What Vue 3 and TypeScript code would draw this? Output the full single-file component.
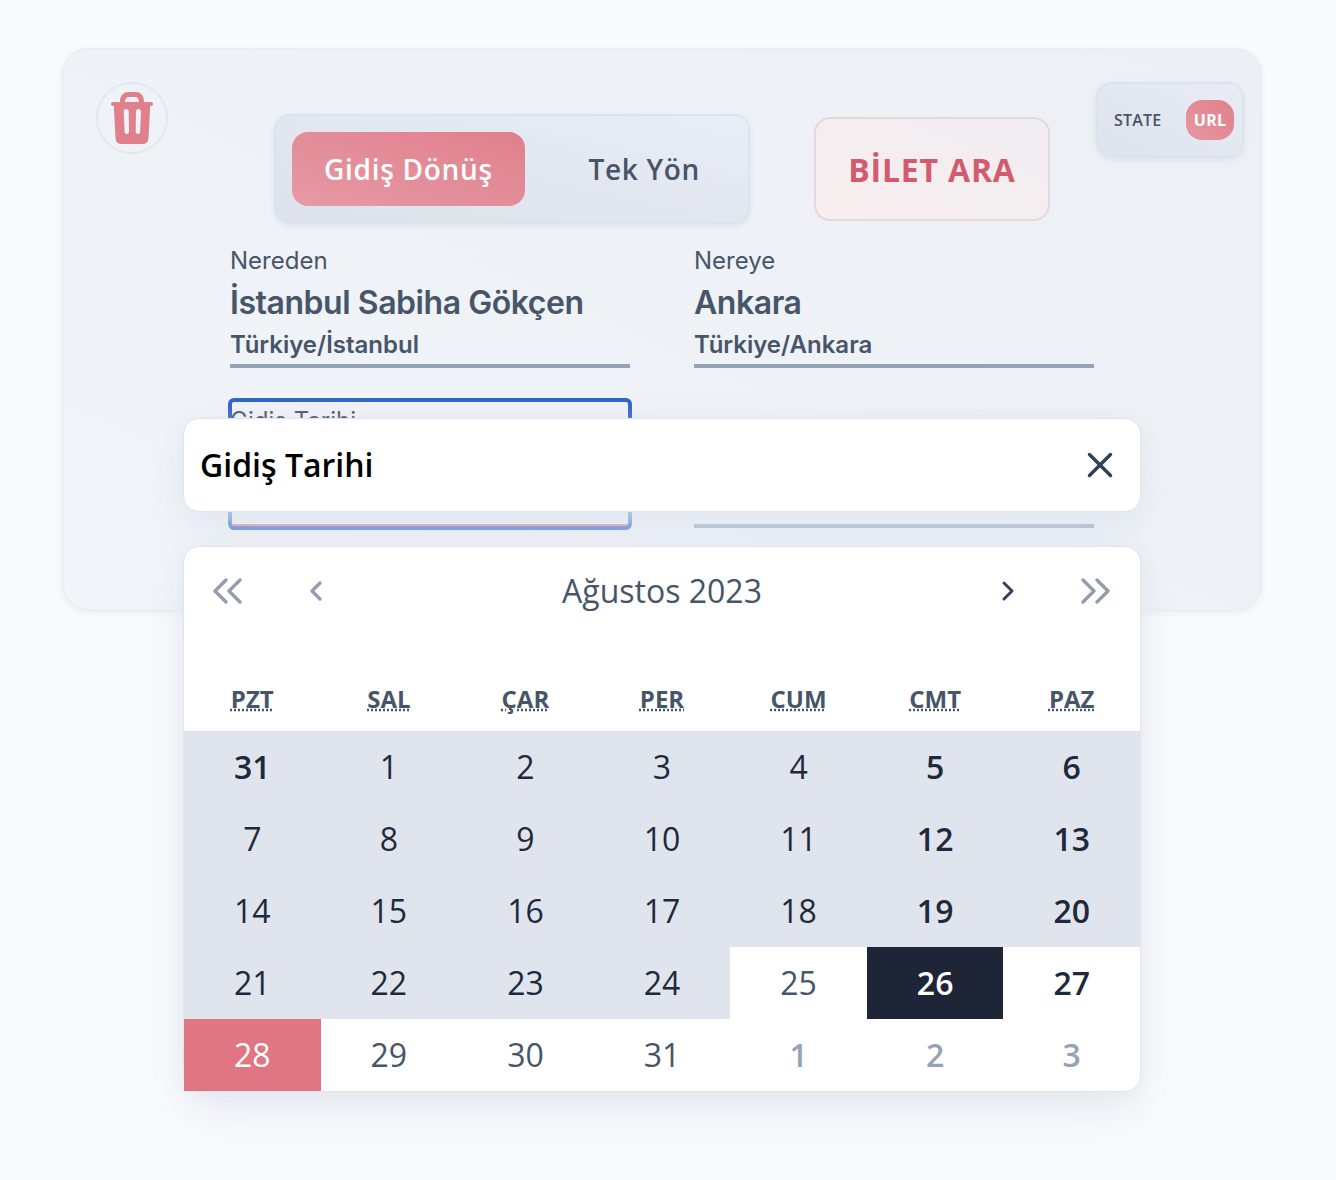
<template>
  <div class="page">
    <div class="card">
      <button class="trash" aria-label="Temizle">
        <svg width="42" height="52" viewBox="0 0 42 52">
          <path class="trash-fill" fill-rule="evenodd" d="M9 10C9 3 13 0 17 0h8c4 0 8 3 8 10h7c1.200 0 2 .8 2 2s-.8 2-2 2h-.8L37.500 46C37.200 50 35 52 31 52H11C7 52 4.800 50 4.500 46L2.800 14H2c-1.200 0-2-.8-2-2s.8-2 2-2zM14 10h14c0-3-1.500-5-4-5h-6c-2.500 0-4 2-4 5zM15.300 17c-1.500 0-2.700 1.200-2.600 2.700l.9 20c.1 1.400 1 2.300 2.200 2.300s2.200-1 2.200-2.400l-.3-20c0-1.500-1-2.600-2.400-2.600zM27.400 17c1.500 0 2.700 1.200 2.600 2.700l-.9 20c-.1 1.400-1 2.300-2.200 2.300s-2.200-1-2.200-2.400l.3-20c0-1.500 1-2.600 2.400-2.600z" />
        </svg>
      </button>

      <div class="mode-switch">
        <span class="mode-label">STATE</span>
        <span class="mode-pill">URL</span>
      </div>

      <div class="top-row">
        <div class="trip-tabs">
          <button class="trip-tab active">Gidiş Dönüş</button>
          <button class="trip-tab">Tek Yön</button>
        </div>
        <button class="search-btn">BİLET ARA</button>
      </div>

      <div class="fields">
        <div v-for="field in places" :key="field.label" class="field">
          <div class="field-label">{{ field.label }}</div>
          <div class="field-value">{{ field.value }}</div>
          <div class="field-sub">{{ field.sub }}</div>
        </div>
        <div class="field date-field focused">
          <div class="field-label">Gidiş Tarihi</div>
        </div>
        <div class="field date-field"></div>
      </div>
    </div>

    <div class="modal">
      <div class="modal-head">
        <span>Gidiş Tarihi</span>
        <svg class="close-icon" width="26" height="26" viewBox="0 0 26 26">
          <path class="icon-dark" d="M2.500 2.500l21 21M23.500 2.500l-21 21" />
        </svg>
      </div>

      <div class="calendar">
        <div class="nav">
          <svg class="nav-btn" width="34" height="26" viewBox="0 0 34 26">
            <path class="icon-muted" d="M15 2L4 13l11 11M29 2L18 13l11 11" />
          </svg>
          <svg class="nav-btn" width="34" height="26" viewBox="0 0 34 26">
            <path class="icon-muted" d="M21 5l-8 8 8 8" />
          </svg>
          <div class="month">Ağustos 2023</div>
          <svg class="nav-btn" width="34" height="26" viewBox="0 0 34 26">
            <path class="icon-dark thin" d="M13 5l8 8-8 8" />
          </svg>
          <svg class="nav-btn" width="34" height="26" viewBox="0 0 34 26">
            <path class="icon-muted" d="M5 2l11 11L5 24M19 2l11 11-11 11" />
          </svg>
        </div>

        <div class="weekdays">
          <div v-for="day in weekdays" :key="day" class="weekday"><abbr>{{ day }}</abbr></div>
        </div>

        <div class="days">
          <div v-for="cell in cells" :key="cell.key" class="day" :class="cell.classes">{{ cell.day }}</div>
        </div>
      </div>
    </div>
  </div>
</template>

<script setup lang="ts">
interface Cell {
  key: string;
  day: number;
  classes: string[];
}

const places = [
  { label: 'Nereden', value: 'İstanbul Sabiha Gökçen', sub: 'Türkiye/İstanbul' },
  { label: 'Nereye', value: 'Ankara', sub: 'Türkiye/Ankara' }
];

const weekdays = ['PZT', 'SAL', 'ÇAR', 'PER', 'CUM', 'CMT', 'PAZ'];

const monthDays: number[] = [31];
for (let i = 1; i <= 31; i++) monthDays.push(i);
monthDays.push(1, 2, 3);

const cells: Cell[] = monthDays.map((day, index) => {
  const classes: string[] = [];
  // geçmiş günler 31 temmuz - 24 ağustos
  if (index < 25) classes.push('past');
  if (index % 7 >= 5 || index === 0) classes.push('bold');
  if (index > 31) classes.push('next');
  if (index === 26) classes.push('selected');
  if (index === 28) classes.push('today');
  return { key: `d-${index}`, day, classes };
});
</script>

<style>
html,
body {
  margin: 0;
  background: #f8fafc;
}
</style>

<style scoped>
.page {
  position: relative;
  width: 1336px;
  height: 1180px;
  padding-top: 48px;
  box-sizing: border-box;
  background: #f9fafc;
  font-family: "Open Sans", "Liberation Sans", sans-serif;
  overflow: hidden;
}

.card {
  position: relative;
  width: 1200px;
  height: 563px;
  margin-left: 62px;
  box-sizing: border-box;
  border-radius: 26px;
  border: 2px solid #eaedf3;
  background: linear-gradient(to top right, #f1f4f9, #ecEff4);
  box-shadow: 0 2px 6px rgba(148, 163, 184, 0.14);
  padding-top: 64px;
}

button {
  font-family: inherit;
  border: 0;
  background: none;
  padding: 0;
}

.trash {
  position: absolute;
  top: 32px;
  left: 32px;
  width: 72px;
  height: 72px;
  box-sizing: border-box;
  border: 2px solid #e2e8f0;
  border-radius: 50%;
  display: flex;
  align-items: center;
  justify-content: center;
}

.trash-fill {
  fill: #e0808c;
}

.mode-switch {
  position: absolute;
  top: 32px;
  right: 16px;
  width: 148px;
  height: 76px;
  box-sizing: border-box;
  border: 2px solid #dde3ed;
  border-radius: 16px;
  background: linear-gradient(to top right, #dde2ec, #e9ecf3);
  box-shadow: 0 2px 5px rgba(148, 163, 184, 0.18);
  display: flex;
  align-items: center;
  justify-content: space-between;
  padding: 0 8px 0 16px;
}

.mode-label {
  font-size: 16px;
  font-weight: 600;
  letter-spacing: 0.2px;
  color: #475569;
}

.mode-pill {
  width: 48px;
  height: 40px;
  border-radius: 16px;
  background: linear-gradient(to top right, #e697a2, #df808c);
  color: #fff;
  font-size: 16px;
  font-weight: 700;
  letter-spacing: 0.2px;
  display: flex;
  align-items: center;
  justify-content: center;
}

.top-row {
  display: flex;
  align-items: center;
  margin-left: 210px;
  gap: 64px;
}

.trip-tabs {
  width: 476px;
  height: 110px;
  box-sizing: border-box;
  border: 2px solid #dde3ed;
  border-radius: 16px;
  background: linear-gradient(to top right, #dce1eb, #e9edf4);
  box-shadow: 0 2px 5px rgba(148, 163, 184, 0.18);
  padding: 16px;
  display: flex;
  justify-content: space-between;
}

.trip-tab {
  height: 74px;
  padding: 0 32px;
  border-radius: 16px;
  font-size: 28px;
  font-weight: 600;
  letter-spacing: 0.7px;
  color: #475569;
}

.trip-tab.active {
  background: linear-gradient(to top right, #e69aa5, #df808c);
  color: #fff;
}

.search-btn {
  width: 236px;
  height: 104px;
  box-sizing: border-box;
  border: 2px solid #e5d8dd;
  border-radius: 16px;
  background: linear-gradient(to top right, #f8eeef, #f0edf1);
  color: #d45a6d;
  font-size: 32px;
  font-weight: 700;
  letter-spacing: 0.8px;
}

.fields {
  display: grid;
  grid-template-columns: 400px 400px;
  column-gap: 64px;
  margin: 19px 0 0 166px;
}

.field {
  height: 125px;
  margin-bottom: 32px;
  box-sizing: border-box;
  border-bottom: 4px solid #94a3b8;
  color: #475569;
  font-family: Inter, "Liberation Sans", sans-serif;
}

.field-label {
  font-size: 24px;
  line-height: 36px;
}

.field-value {
  font-size: 32px;
  font-weight: 600;
  letter-spacing: -0.45px;
  line-height: 48px;
}

.field-sub {
  font-size: 24px;
  font-weight: 600;
  line-height: 36px;
}

.date-field {
  height: 128px;
}

.date-field.focused {
  padding-top: 3px;
  border-bottom-color: #e07583;
  border-radius: 4px;
  outline: 4px solid #3064c8;
  outline-offset: -2px;
}

.modal {
  position: absolute;
  top: 418px;
  left: 183px;
  width: 958px;
}

.modal-head {
  height: 94px;
  box-sizing: border-box;
  background: #fff;
  border: 1px solid #dfe5ee;
  border-radius: 16px;
  box-shadow: 0 25px 50px -12px #e2e8f0, 0 4px 24px rgba(203, 213, 225, 0.35);
  display: flex;
  align-items: center;
  justify-content: space-between;
  padding: 0 27px 2px 16px;
  font-size: 32px;
  font-weight: 600;
  color: #000;
}

.close-icon {
  margin-top: 2px;
}

.icon-dark,
.icon-muted {
  fill: none;
  stroke-width: 3.500;
  stroke-linecap: round;
  stroke-linejoin: round;
}

.icon-dark {
  stroke: #334155;
}

.icon-dark.thin {
  stroke-width: 3;
}

.icon-muted {
  stroke: #959dac;
  stroke-width: 3.400;
}

.calendar {
  margin-top: 34px;
  background: #fff;
  border: 1px solid #dfe5ee;
  border-radius: 16px;
  box-shadow: 0 25px 50px -12px #e2e8f0, 0 4px 24px rgba(203, 213, 225, 0.35);
}

.nav {
  height: 89px;
  box-sizing: border-box;
  padding: 0 28px 3px 27px;
  display: flex;
  align-items: center;
}

.nav-btn {
  width: 34px;
  flex: none;
  margin-top: 2px;
}

.nav-btn:nth-child(2) {
  margin-left: 54px;
}

.nav-btn:nth-child(4) {
  margin-right: 53px;
}

.month {
  flex: 1;
  text-align: center;
  font-size: 32px;
  color: #475569;
}

.weekdays,
.days {
  display: grid;
  grid-template-columns: repeat(7, 1fr);
}

.weekdays {
  margin-top: 17px;
  height: 78px;
  box-sizing: border-box;
  padding-top: 12px;
}

.weekday {
  display: flex;
  align-items: center;
  justify-content: center;
  font-size: 24px;
  font-weight: 700;
  color: #475569;
}

abbr {
  text-decoration: underline dotted;
}

.day {
  height: 72px;
  box-sizing: border-box;
  padding-bottom: 2px;
  display: flex;
  align-items: center;
  justify-content: center;
  font-size: 32px;
  color: #475569;
}

.day.past {
  background: #e0e4ed;
  color: #1e293b;
}

.day.bold {
  font-weight: 600;
  color: #1e293b;
}

.day.selected {
  background: #1e2536;
  color: #fff;
}

.day.today {
  background: #e07583;
  color: #fff;
}

.day.next {
  color: #94a3b8;
  font-weight: 600;
}
</style>
